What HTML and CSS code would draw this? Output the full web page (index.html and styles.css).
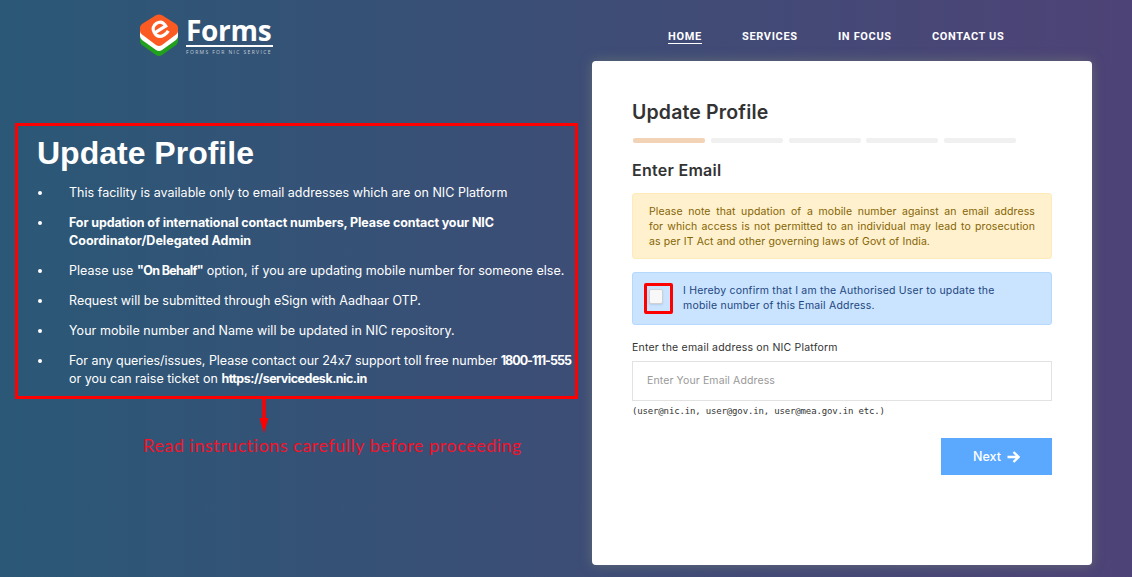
FILE: index.html
```html
<!DOCTYPE html>
<html lang="en">
<head>
<meta charset="utf-8">
<title>eForms - Update Profile</title>
<link rel="stylesheet" href="styles.css">
</head>
<body>
<header class="header">
  <a class="logo">
    <svg class="logo-mark" width="40" height="43" viewBox="0 0 40 43">
      <path d="M1 20H39V27Q39 29.500 37 31L23 41Q20 43 17 41L3 31Q1 29.500 1 27Z" fill="#20a01c"/>
      <path d="M1 16H39V22Q39 24.500 37 26L23 36Q20 38 17 36L3 26Q1 24.500 1 22Z" fill="#fff"/>
      <path d="M16.500 1.500Q20-.3 23.500 1.500L37 10Q39 11.500 39 13.500V17Q39 19 37 20.500L23 31Q20 33 17 31L3 20.500Q1 19 1 17V13.500Q1 11.500 3 10Z" fill="#fb5a22"/>
      <path d="M14.500 15.500H27.500C27.500 10.800 25 8.300 21 8.300C16.800 8.300 14.200 11 14.200 15.200C14.200 19.800 17 22.300 21.500 22.300C23.600 22.300 25.300 21.900 27 21" fill="none" stroke="#fff" stroke-width="3.200" transform="rotate(-32 21 15)"/>
    </svg>
    <span class="logo-text">
      <span class="logo-name">Forms</span>
      <span class="logo-tag">FORMS FOR NIC SERVICE</span>
    </span>
  </a>
  <nav class="nav">
    <a class="nav-link active">HOME</a>
    <a class="nav-link services">SERVICES</a>
    <a class="nav-link focus">IN FOCUS</a>
    <a class="nav-link contact">CONTACT US</a>
  </nav>
</header>
<main class="main">
  <div class="left">
    <section class="instructions">
      <h1>Update Profile</h1>
      <ul>
        <li><span class="facility">This facility is available only to email addresses which are on NIC Platform</span></li>
        <li><b class="updation">For updation of international contact numbers, Please contact your NIC</b><br><b>Coordinator/Delegated Admin</b></li>
        <li><span class="behalf">Please use <b>"On Behalf"</b> option, if you are updating mobile number for someone else.</span></li>
        <li><span class="facility">Request will be submitted through eSign with Aadhaar OTP.</span></li>
        <li><span class="repository">Your mobile number and Name will be updated in NIC repository.</span></li>
        <li><span class="support">For any queries/issues, Please contact our 24x7 support toll free number <b>1800-111-555</b></span><br><span class="ticket">or you can raise ticket on <b>https://servicedesk.nic.in</b></span></li>
      </ul>
    </section>
    <svg class="arrow" width="10" height="34" viewBox="0 0 10 34"><path d="M3.300 0H6.700V19H9.500L5 34 .5 19H3.300Z" fill="#f00"/></svg>
    <p class="note">Read instructions carefully before proceeding</p>
  </div>
  <form class="card">
    <h2>Update Profile</h2>
    <div class="steps"><i class="on"></i><i></i><i></i><i></i><i></i></div>
    <h3>Enter Email</h3>
    <div class="alert warn">Please note that updation of a mobile number against an email address<br>for which access is not permitted to an individual may lead to prosecution<br><span class="last">as per IT Act and other governing laws of Govt of India.</span></div>
    <div class="alert info">
      <span class="mark"><span class="check"></span></span>
      <label>I Hereby confirm that I am the Authorised User to update the<br>mobile number of this Email Address.</label>
    </div>
    <label class="field-label">Enter the email address on NIC Platform</label>
    <div class="field">Enter Your Email Address</div>
    <div class="hint">(user@nic.in, user@gov.in, user@mea.gov.in etc.)</div>
    <button type="button" class="next">Next
      <svg width="13" height="12" viewBox="0 0 13 12"><path d="M.5 6H11M6.500 1 11.500 6 6.500 11" fill="none" stroke="#fff" stroke-width="2.400"/></svg>
    </button>
  </form>
</main>
</body>
</html>
```
FILE: styles.css
```css
* { box-sizing: border-box; }
body {
  margin: 0;
  width: 1132px;
  height: 577px;
  overflow: hidden;
  background: linear-gradient(to right, #2b5876, #4e4376);
  font-family: Inter, sans-serif;
  color: #fff;
  white-space: nowrap;
}
h1, h2, h3, p, ul { margin: 0; padding: 0; }
.header { display: flex; height: 61px; }
.logo { display: flex; padding: 14px 0 0 139px; width: 668px; }
.logo-mark { flex: none; }
.logo-text { display: flex; flex-direction: column; margin-left: 7px; width: 87px; }
.logo-name {
  height: 33px;
  border-bottom: 2px solid #fff;
  font: 700 28px/33px "Open Sans", sans-serif;
  letter-spacing: -.3px;
}
.logo-tag { margin-top: 2px; font: 5px/6px "Open Sans", sans-serif; letter-spacing: 1.350px; color: #c5cedb; }
.nav { display: flex; padding-top: 29px; font: 700 11px/15px Roboto, sans-serif; letter-spacing: .65px; }
.nav-link { height: 15px; }
.active { width: 34px; border-bottom: 1px solid #fff; margin-right: 40px; }
.services { width: 96px; }
.focus { width: 94px; }
.contact { letter-spacing: .6px; }
.main { display: flex; }
.left { width: 592px; padding: 62px 0 0 15px; }
.instructions { width: 563px; height: 276px; border: 3px solid #f00; padding: 8px 0 0 19px; }
.instructions h1 { font: 700 32px/38px "Liberation Sans", sans-serif; }
.instructions ul { list-style: none; margin-top: 12px; font-size: 12.500px; line-height: 18px; }
.instructions li { display: block; padding-left: 32px; margin-bottom: 12px; }
.instructions li::before {
  content: "";
  float: left;
  width: 4px;
  height: 4px;
  margin: 7px 0 0 -31px;
  border-radius: 50%;
  background: #fff;
}
.facility { letter-spacing: .02px; }
.updation { letter-spacing: -.115px; }
.behalf b { letter-spacing: -.650px; }
.behalf { letter-spacing: .03px; }
.repository { letter-spacing: .06px; }
.support { letter-spacing: -.03px; }
.support b { letter-spacing: -1px; }
.ticket b { letter-spacing: -.5px; }
.arrow { display: block; margin-left: 244px; }
.note { margin-left: 128px; font: 18px/25px Lato, sans-serif; letter-spacing: .5px; color: #f5122a; }
.card {
  width: 500px;
  height: 504px;
  padding: 40px;
  background: #fff;
  border-radius: 4px;
  box-shadow: 0 0 12px rgba(120, 130, 120, .6);
  color: #333;
}
.card h2 { font-size: 19.500px; font-weight: 600; line-height: 23px; letter-spacing: .15px; }
.steps { display: flex; gap: 5.750px; padding-left: 1px; margin-top: 14px; }
.steps i { width: 72px; height: 5px; border-radius: 2px; background: #f0f0f0; }
.steps .on { background: #f3d3b5; }
.card h3 { margin-top: 15px; font-size: 16px; font-weight: 600; line-height: 24px; letter-spacing: .27px; }
.alert { border: 1px solid; border-radius: 3px; font-size: 10.500px; line-height: 15px; }
.warn { margin-top: 11px; height: 66px; padding: 10px 16px; background: #fff1cd; border-color: #ffeaba; color: #856404; letter-spacing: .1px; text-align: justify; text-align-last: justify; }
.warn .last { display: block; width: 281px; }
.info { display: flex; margin-top: 13px; height: 53px; padding: 10px 11px; background: #cae3ff; border-color: #b5d8ff; color: #1d4780; letter-spacing: .2px; }
.mark { width: 29px; height: 31px; margin-right: 10px; padding: 3px 2px; border: 3px solid #f00; border-radius: 2px; }
.check { display: block; width: 14px; height: 15px; border: 1px solid #d0d0d0; border-radius: 2px; background: #f8f8f8; box-shadow: 0 1px 2px rgba(0, 0, 0, .1); }
.field-label { display: block; margin-top: 15px; font-size: 10.500px; line-height: 16px; letter-spacing: .2px; }
.field { margin-top: 5px; height: 40px; padding-left: 14px; border: 1px solid #e2e2e2; font-size: 10.500px; line-height: 38px; letter-spacing: .12px; color: #999; }
.hint { margin-top: 4px; font: 9px/13px "DejaVu Sans Mono", monospace; letter-spacing: -.15px; }
.next { display: flex; align-items: center; justify-content: center; gap: 6px; width: 111px; height: 37px; margin: 20px 0 0 auto; padding: 0; border: 0; background: #5aa9ff; color: #fff; font: 500 12.500px Inter, sans-serif; }
```
